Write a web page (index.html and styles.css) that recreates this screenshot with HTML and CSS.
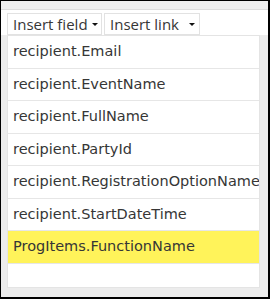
FILE: index.html
```html
<!DOCTYPE html>
<html>
<head>
<meta charset="utf-8">
<link rel="stylesheet" href="styles.css">
</head>
<body>
<div class="frame">
  <div class="topband"></div>
  <div class="toolbar">
    <button class="btn btn-field">Insert field<span class="caret"></span></button>
    <button class="btn btn-link">Insert link<span class="caret"></span></button>
  </div>
  <div class="content">
    <ul class="menu">
      <li class="item">recipient.Email</li>
      <li class="item">recipient.EventName</li>
      <li class="item">recipient.FullName</li>
      <li class="item">recipient.PartyId</li>
      <li class="item">recipient.RegistrationOptionName</li>
      <li class="item">recipient.StartDateTime</li>
      <li class="item active">ProgItems.FunctionName</li>
    </ul>
  </div>
</div>
</body>
</html>
```
FILE: styles.css
```css
html, body {
  margin: 0;
  padding: 0;
  background: #fff;
}
.frame {
  position: relative;
  width: 270px;
  height: 299px;
  box-sizing: border-box;
  border-style: solid;
  border-color: #000;
  border-width: 1px 2px 2px 1px;
  background: #ececec;
  font-family: "DejaVu Sans", sans-serif;
  color: #363636;
  overflow: hidden;
}
.topband {
  height: 8px;
  background: #f0f0f0;
  border-bottom: 1px solid #dedede;
}
.toolbar {
  height: 25px;
  background: #fff;
  box-sizing: border-box;
  padding: 3px 0 0 6px;
  display: flex;
  gap: 2px;
  align-items: flex-start;
}
.btn {
  position: relative;
  height: 22px;
  box-sizing: border-box;
  border: 1px solid #e2e2e2;
  background: #fff;
  font-family: "Open Sans", sans-serif;
  font-size: 15px;
  color: #363636;
  padding: 0 0 0 5px;
  text-align: left;
  line-height: 19px;
  margin: 0;
}
.btn-field { width: 95px; }
.btn-link { width: 96px; }
.caret {
  position: absolute;
  top: 9px;
  right: 3px;
  width: 0;
  height: 0;
  border-left: 3px solid transparent;
  border-right: 3px solid transparent;
  border-top: 3px solid #111;
}
.btn-link .caret { right: 4px; }
.content {
  position: relative;
  height: 253px;
}
.menu {
  position: absolute;
  top: 0;
  left: 6px;
  width: 253px;
  height: 253px;
  box-sizing: border-box;
  margin: 0;
  padding: 0;
  list-style: none;
  background: #fff;
  border: 1px solid #e4e4e4;
  overflow: hidden;
}
.item {
  height: 32.5px;
  box-sizing: border-box;
  border-bottom: 1px solid #e6e6e6;
  padding: 0 0 0 5px;
  font-size: 14.5px;
  line-height: 31px;
  white-space: nowrap;
}
.item.active {
  background: #fff35a;
}
```
